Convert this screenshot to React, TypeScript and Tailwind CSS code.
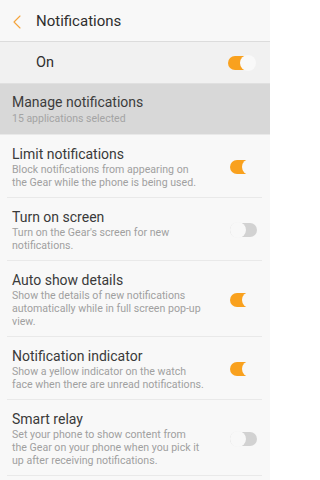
import { ChevronLeft } from 'lucide-react';

type Item = { title: string; lines: string[]; on: boolean };

// line breaks follow the reference screen
const items: Item[] = [
  { title: 'Limit notifications', lines: ['Block notifications from appearing on', 'the Gear while the phone is being used.'], on: true },
  { title: 'Turn on screen', lines: ["Turn on the Gear's screen for new", 'notifications.'], on: false },
  { title: 'Auto show details', lines: ['Show the details of new notifications', 'automatically while in full screen pop-up', 'view.'], on: true },
  { title: 'Notification indicator', lines: ['Show a yellow indicator on the watch', 'face when there are unread notifications.'], on: true },
  { title: 'Smart relay', lines: ['Set your phone to show content from', 'the Gear on your phone when you pick it', 'up after receiving notifications.'], on: false },
];

function Toggle({ on, knob }: { on: boolean; knob: string }) {
  return (
    <div className="relative w-[28px] h-[16px] shrink-0">
      <div className={`absolute left-0 top-[1px] w-[27px] h-[14px] rounded-full ${on ? 'bg-[#f9a11e]' : 'bg-[#d2d2d2]'}`} />
      <div className={`absolute top-0 w-[16px] h-[16px] rounded-full ${knob} ${on ? 'right-0' : 'left-0 shadow-[0_0_1px_rgba(0,0,0,0.04)]'}`} />
    </div>
  );
}

export default function App() {
  return (
    <div className="w-[270px] h-[480px] overflow-hidden bg-[#f8f8f8] text-[#333] font-['Roboto',sans-serif]">
      {/* header */}
      <div className="h-[42px] flex items-center pt-[2px] border-b border-[#dcdcdc]">
        <ChevronLeft className="w-[24px] h-[24px] ml-[5px] text-[#f5a33a]" strokeWidth={1.1} />
        <span className="ml-[7px] text-[15px] text-[#2e2e2e]">Notifications</span>
      </div>

      <div className="h-[42px] bg-[#f1f1f1] flex items-center pl-[36px] pr-[14px] justify-between border-b border-[#e0e0e0]">
        <span className="text-[14.5px] text-[#2e2e2e]">On</span>
        <Toggle on knob="bg-[#f9f9f9]" />
      </div>

      <div className="h-[51px] bg-[#d8d8d8] pl-3 pt-[9px] border-b border-[#e9e9e9]">
        <div className="text-[14px] leading-[18px] text-[#3c3c3c]">Manage notifications</div>
        <div className="text-[10.5px] leading-[15px] text-[#a4a4a4]">15 applications selected</div>
      </div>

      {items.map((it) => (
        <div key={it.title}>
          <div className="flex items-center justify-between pl-3 pr-[12px] pt-[10px] pb-[8px]">
            <div className="min-w-0">
              <div className="text-[14px] leading-[18px] text-[#3a3a3a]">{it.title}</div>
              <div className="text-[10.6px] leading-[13px] text-[#a0a0a0] whitespace-nowrap">
                {it.lines.map((l) => (
                  <div key={l}>{l}</div>
                ))}
              </div>
            </div>
            <Toggle on={it.on} knob="bg-[#f8f8f8]" />
          </div>
          <div className="h-px bg-[#e9e9e9] ml-[7px] mr-[8px]" />
        </div>
      ))}
    </div>
  );
}
